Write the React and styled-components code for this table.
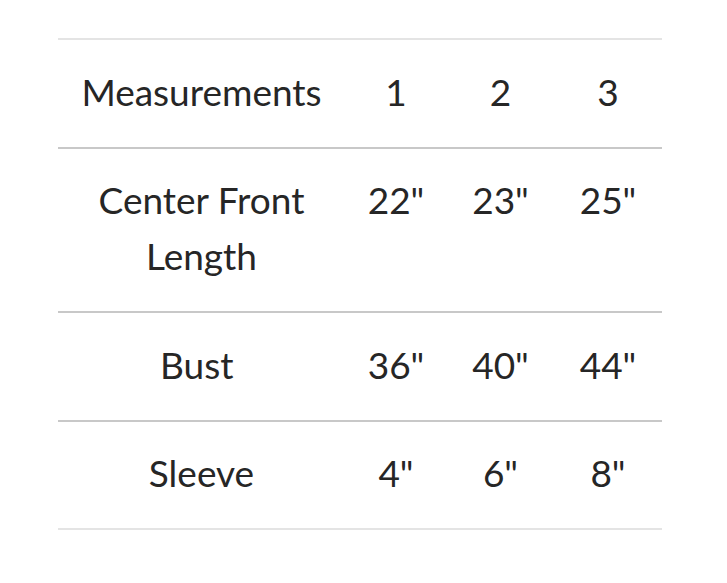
import React from "react";
import styled, { createGlobalStyle } from "styled-components";

const Global = createGlobalStyle`
  html, body { margin: 0; padding: 0; background: #ffffff; }
  body { font-family: "Lato", "Noto Sans", sans-serif; }
`;

const Page = styled.div`
  padding: 38px 0 0 58px;
`;

const Table = styled.div`
  width: 604px;
  border-top: 2px solid #e4e4e4;
  border-bottom: 2px solid #e4e4e4;
`;

const Row = styled.div`
  display: grid;
  grid-template-columns: 287px 102px 107px 108px;
  border-top: ${(p) => (p.$first ? "none" : "2px solid #c8c8c8")};
`;

const Cell = styled.div`
  padding: 23.5px 0 27px;
  text-align: center;
  font-size: 37px;
  line-height: 56px;
  color: #262626;
  font-weight: 400;
`;

const rows = [
  ["Measurements", "1", "2", "3"],
  [<>Center Front<br />Length</>, '22"', '23"', '25"'],
  ["Bust\u00a0", '36"', '40"', '44"'],
  ["Sleeve", '4"', '6"', '8"'],
];

export default function App() {
  return (
    <>
      <Global />
      <Page>
        <Table>
          {rows.map((r, i) => (
            <Row key={i} $first={i === 0}>
              {r.map((c, j) => (
                <Cell key={j}>{c}</Cell>
              ))}
            </Row>
          ))}
        </Table>
      </Page>
    </>
  );
}
